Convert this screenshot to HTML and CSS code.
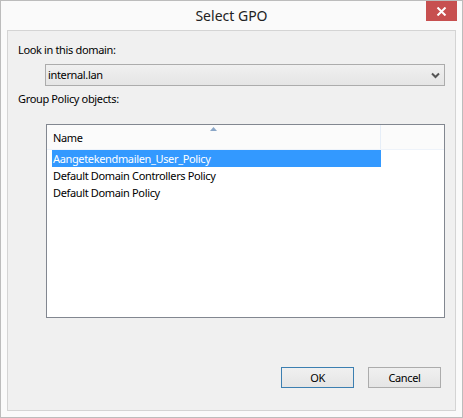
FILE: index.html
```html
<!DOCTYPE html>
<html>
<head>
<meta charset="utf-8">
<link rel="stylesheet" href="styles.css">
</head>
<body>
<div class="window">
  <div class="titlebar">
    <div class="title">Select GPO</div>
    <div class="close">
      <svg width="11" height="9" viewBox="0 0 11 9"><path d="M1.5 0.5 L9.5 8.5 M9.5 0.5 L1.5 8.5" stroke="#fff" stroke-width="2" fill="none"/></svg>
    </div>
  </div>
  <div class="panel">
    <div class="label first">Look in this domain:</div>
    <div class="combo">
      <span class="combo-text">internal.lan</span>
      <svg class="chev" width="9" height="7" viewBox="0 0 9 7"><path d="M1 1.5 L4.5 5 L8 1.5" stroke="#555" stroke-width="2" fill="none"/></svg>
    </div>
    <div class="label second">Group Policy objects:</div>
    <div class="list">
      <div class="header">
        <div class="col-name">Name
          <svg class="sort" width="7" height="4" viewBox="0 0 7 4"><path d="M0 4 L3.5 0 L7 4 Z" fill="#8aa6c7"/></svg>
        </div>
        <div class="col-rest"></div>
      </div>
      <div class="row selected">Aangetekendmailen_User_Policy</div>
      <div class="row">Default Domain Controllers Policy</div>
      <div class="row">Default Domain Policy</div>
    </div>
    <div class="buttons">
      <div class="btn default">OK</div>
      <div class="btn">Cancel</div>
    </div>
  </div>
</div>
</body>
</html>
```
FILE: styles.css
```css
html, body {
  margin: 0;
  padding: 0;
  background: #fafafa;
}
body {
  font-family: "Noto Sans", "Open Sans", sans-serif;
  font-size: 11px;
  letter-spacing: -0.35px;
  color: #000;
}
.window {
  box-sizing: border-box;
  width: 463px;
  height: 418px;
  border: 1px solid #bcbcbc;
  background: #fafafa;
  padding: 0 6px 6px 6px;
  display: flex;
  flex-direction: column;
}
.titlebar {
  height: 29px;
  position: relative;
  display: flex;
  align-items: center;
  justify-content: center;
}
.title {
  font-size: 14px;
  letter-spacing: 0;
  color: #222;
  margin-top: -1px;
}
.close {
  position: absolute;
  right: -1px;
  top: 0;
  width: 31px;
  height: 20px;
  background: #c75050;
  display: flex;
  align-items: center;
  justify-content: center;
}
.panel {
  flex: 1;
  border: 1px solid #d4d4d4;
  background: #f0f0f0;
  display: flex;
  flex-direction: column;
  padding: 0 10px 0 10px;
}
.label {
  line-height: 16px;
  color: #000;
}
.label.first {
  margin-top: 11px;
}
.combo {
  box-sizing: border-box;
  margin: 6px 0 0 27px;
  width: 400px;
  height: 22px;
  border: 1px solid #acacac;
  background: linear-gradient(#f0f0f0, #e5e5e5);
  display: flex;
  align-items: center;
  justify-content: space-between;
  padding: 0 4px 0 2px;
}
.combo-text {
  line-height: 16px;
}
.chev {
  margin-top: 1px;
}
.label.second {
  margin-top: 5px;
}
.list {
  box-sizing: border-box;
  margin: 17px 0 0 28px;
  width: 399px;
  height: 194px;
  border: 1px solid #828790;
  background: #fff;
}
.header {
  display: flex;
  height: 24px;
  background: #fbfbfb;
  border-bottom: 1px solid #eef3fa;
}
.col-name {
  position: relative;
  width: 334px;
  padding-left: 6px;
  display: flex;
  align-items: center;
  border-right: 1px solid #e6eef8;
  box-sizing: border-box;
}
.sort {
  position: absolute;
  left: 163px;
  top: 2px;
}
.col-rest {
  flex: 1;
}
.row {
  width: 329px;
  margin-left: 5px;
  height: 17px;
  line-height: 17px;
  padding-left: 1px;
  box-sizing: border-box;
}
.row.selected {
  background: #3399ff;
  color: #fff;
}
.buttons {
  display: flex;
  justify-content: flex-end;
  gap: 14px;
  margin-top: 49px;
  padding-right: 4px;
}
.btn {
  box-sizing: border-box;
  width: 73px;
  height: 21px;
  border: 1px solid #acacac;
  background: linear-gradient(#f0f0f0, #e5e5e5);
  display: flex;
  align-items: center;
  justify-content: center;
}
.btn.default {
  border-color: #3c7fb1;
}
```
